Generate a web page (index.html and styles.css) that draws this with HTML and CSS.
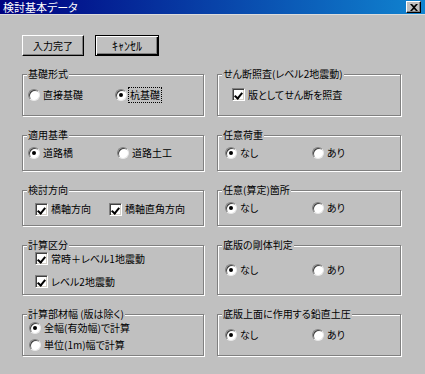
FILE: index.html
```html
<!DOCTYPE html>
<html lang="ja">
<head>
<meta charset="utf-8">
<title>検討基本データ</title>
<link rel="stylesheet" href="styles.css">
</head>
<body>
<div class="window">
  <div class="titlebar">
    <span class="title">検討基本データ</span>
    <span class="close"><svg width="8" height="7" viewBox="0 0 8 7"><path d="M0 0h2l2 2 2-2h2L5 3.5 8 7H6L4 5 2 7H0l3-3.5z" fill="#000"/></svg></span>
  </div>
  <div class="content">
    <div class="buttons">
      <button class="btn">入力完了</button>
      <button class="btn btn-default">ｷｬﾝｾﾙ</button>
    </div>
    <div class="groups">
      <fieldset class="group row-a">
        <legend>基礎形式</legend>
        <div class="line w-a"><span class="opt"><span class="radio"></span>直接基礎</span><span class="opt"><span class="radio on"></span><span class="focus">杭基礎</span></span></div>
      </fieldset>
      <fieldset class="group row-a">
        <legend>せん断照査(レベル2地震動)</legend>
        <div class="line ind-r1"><span class="opt"><span class="check on"></span>版としてせん断を照査</span></div>
      </fieldset>

      <fieldset class="group">
        <legend>適用基準</legend>
        <div class="line w-b"><span class="opt"><span class="radio on"></span>道路橋</span><span class="opt"><span class="radio"></span>道路土工</span></div>
      </fieldset>
      <fieldset class="group">
        <legend>任意荷重</legend>
        <div class="line w-r"><span class="opt"><span class="radio on"></span>なし</span><span class="opt"><span class="radio"></span>あり</span></div>
      </fieldset>

      <fieldset class="group shift-down">
        <legend>検討方向</legend>
        <div class="line w-c"><span class="opt"><span class="check on"></span>橋軸方向</span><span class="opt"><span class="check on"></span>橋軸直角方向</span></div>
      </fieldset>
      <fieldset class="group">
        <legend>任意(算定)箇所</legend>
        <div class="line w-r"><span class="opt"><span class="radio on"></span>なし</span><span class="opt"><span class="radio"></span>あり</span></div>
      </fieldset>

      <fieldset class="group stack-wide">
        <legend>計算区分</legend>
        <div class="line ind-c"><span class="opt"><span class="check on"></span>常時＋レベル1地震動</span></div>
        <div class="line ind-c"><span class="opt"><span class="check on"></span>レベル2地震動</span></div>
      </fieldset>
      <fieldset class="group">
        <legend>底版の剛体判定</legend>
        <div class="line w-r"><span class="opt"><span class="radio on"></span>なし</span><span class="opt"><span class="radio"></span>あり</span></div>
      </fieldset>

      <fieldset class="group stack-tight">
        <legend>計算部材幅 (版は除く)</legend>
        <div class="line ind-e"><span class="opt"><span class="radio on"></span>全幅(有効幅)で計算</span></div>
        <div class="line ind-e"><span class="opt"><span class="radio"></span>単位(1m)幅で計算</span></div>
      </fieldset>
      <fieldset class="group">
        <legend>底版上面に作用する鉛直土圧</legend>
        <div class="line w-r"><span class="opt"><span class="radio on"></span>なし</span><span class="opt"><span class="radio"></span>あり</span></div>
      </fieldset>
    </div>
  </div>
</div>
</body>
</html>
```

FILE: styles.css
```css
* { box-sizing: border-box; }
html, body { margin: 0; padding: 0; }
body {
  background: #c0c0c0;
  font-family: "Noto Sans CJK JP", "Noto Sans", sans-serif;
  font-size: 10px;
  line-height: 12px;
  color: #000;
  font-feature-settings: "palt";
}
.window { width: 425px; height: 374px; background: #c0c0c0; }

.titlebar {
  height: 15px;
  display: flex;
  align-items: center;
  justify-content: space-between;
  padding: 0 4px 0 3px;
  background: linear-gradient(to right, #000080, #1084d0);
  border-bottom: 1px solid #dcdcdc;
}
.title { color: #fff; font-size: 11px; line-height: 13px; }
.close {
  width: 15px;
  height: 12px;
  display: flex;
  align-items: center;
  justify-content: center;
  background: #c0c0c0;
  border: 1px solid;
  border-color: #fff #000 #000 #fff;
  box-shadow: inset -1px -1px 0 #808080;
}

.content { padding: 20px 0 0 22px; }

.buttons { display: flex; gap: 11px; height: 21px; }
.btn {
  font: inherit;
  font-feature-settings: "palt";
  width: 62px;
  height: 21px;
  padding: 0;
  background: #c0c0c0;
  border: 1px solid;
  border-color: #fff #000 #000 #fff;
  box-shadow: inset -1px -1px 0 #808080;
  color: #000;
}
.btn-default {
  width: 64px;
  font-size: 12px;
  border: 1px solid #000;
  box-shadow: inset 1px 1px 0 #fff, inset -1px -1px 0 #000, inset -2px -2px 0 #808080;
}

.groups {
  margin-top: 12px;
  display: grid;
  grid-template-columns: 182px 184px;
  grid-template-rows: 48px 42px 42px 56px 48px;
  column-gap: 13px;
  row-gap: 13px;
}
.group {
  margin: 0;
  min-width: 0;
  padding: 0 0 6px 0;
  border: 1px solid #808080;
  box-shadow: inset 1px 1px 0 #fff, 1px 1px 0 #fff;
  display: flex;
  flex-direction: column;
  justify-content: center;
}
.group legend {
  margin-left: 4px;
  padding: 0 1px;
  background: #c0c0c0;
  line-height: 12px;
}
.shift-down { padding-top: 3px; }
.stack-wide { gap: 11px; padding-bottom: 5px; }
.stack-tight { gap: 5px; padding-top: 2px; padding-bottom: 4px; }

.line { display: flex; align-items: center; height: 12px; padding-left: 5px; }
.w-a .opt:first-child { width: 87px; }
.w-b .opt:first-child { width: 89px; }
.w-c { padding-left: 12px; }
.w-c .opt:first-child { width: 74px; }
.w-r { padding-left: 7px; }
.w-r .opt:first-child { width: 87px; }
.ind-r1 { padding-left: 14px; }
.ind-c { padding-left: 12px; }
.ind-e { padding-left: 6px; }

.opt { display: flex; align-items: center; white-space: nowrap; }

.radio {
  position: relative;
  width: 12px;
  height: 12px;
  flex: none;
  margin-right: 3px;
  border-radius: 50%;
  background: #fff;
  border: 1px solid;
  border-color: #808080 #e8e8e8 #e8e8e8 #808080;
  box-shadow: inset 1px 1px 0 #404040;
}
.radio.on::after {
  content: "";
  position: absolute;
  left: 3px;
  top: 3px;
  width: 4px;
  height: 4px;
  border-radius: 50%;
  background: #000;
}

.check {
  position: relative;
  width: 13px;
  height: 13px;
  flex: none;
  margin-right: 3px;
  background: #fff;
  border: 1px solid;
  border-color: #808080 #fff #fff #808080;
  box-shadow: inset 1px 1px 0 #404040, inset -1px -1px 0 #d4d0c8;
}
.check.on::after {
  content: "";
  position: absolute;
  left: 3px;
  top: 2px;
  width: 3px;
  height: 6px;
  border: solid #000;
  border-width: 0 2px 2px 0;
  transform: rotate(40deg);
}

.focus { outline: 1px dotted #000; outline-offset: 1px; }
```
